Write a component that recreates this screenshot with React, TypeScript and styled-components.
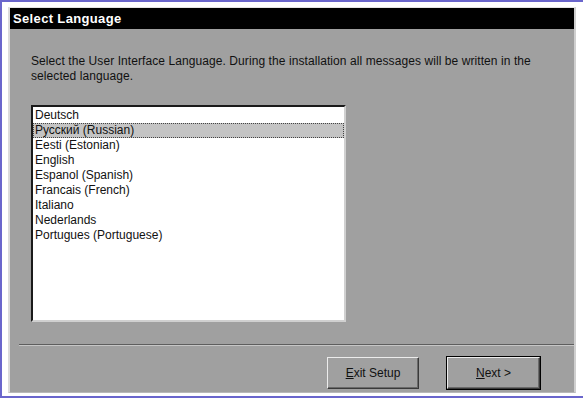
import React from "react";
import styled, { createGlobalStyle } from "styled-components";

const Global = createGlobalStyle`
  html, body { margin: 0; padding: 0; background: #ffffff; }
  body { font-family: "Liberation Sans", Arial, sans-serif; }
  * { box-sizing: border-box; }
`;

const Root = styled.div`
  width: 583px;
  height: 399px;
  background: #ffffff;
  overflow: hidden;
`;

const Frame = styled.div`
  height: 398px;
  border-top: 2px solid #6a66cc;
  border-left: 2px solid #6a66cc;
  border-bottom: 2px solid #6a66cc;
  padding: 5px 0 3px 6px;
  display: flex;
`;

const Dialog = styled.div`
  width: 568px;
  display: flex;
  flex-direction: column;
  background: #a0a0a0;
  border-top: 1px solid #e4e4e4;
  border-left: 2px solid #dcdcdc;
  border-right: 2px solid #cfcfcf;
  border-bottom: 1px solid #b8b8b8;
`;

const TitleBar = styled.div`
  height: 21px;
  background: #000000;
  color: #ffffff;
  font-weight: bold;
  font-size: 13px;
  line-height: 21px;
  padding-left: 3px;
  letter-spacing: 0.35px;
`;

const Body = styled.div`
  flex: 1;
  display: flex;
  flex-direction: column;
  padding: 25px 0 0 21px;
`;

const Intro = styled.p`
  margin: 0;
  width: 515px;
  font-size: 12px;
  line-height: 15px;
  letter-spacing: 0.08px;
  color: #111111;
`;

const ListBox = styled.ul`
  list-style: none;
  margin: 21px 0 0 0;
  padding: 1px 0 0 0;
  width: 315px;
  height: 217px;
  background: #ffffff;
  border-top: 2px solid #1a1a1a;
  border-left: 2px solid #1a1a1a;
  border-right: 2px solid #d0d0d0;
  border-bottom: 2px solid #d0d0d0;
`;

const Item = styled.li<{ $selected?: boolean }>`
  height: 15px;
  font-size: 12px;
  line-height: 15px;
  color: #111111;
  padding-left: 2px;
  background: ${(p) => (p.$selected ? "#c4c4c4" : "transparent")};
  outline: ${(p) => (p.$selected ? "1px dotted #444444" : "none")};
  outline-offset: -1px;
`;

const Separator = styled.div`
  margin: 22px 0 0 9px;
  height: 2px;
  border-top: 1px solid #5e5e5e;
  border-bottom: 1px solid #c6c6c6;
`;

const ButtonRow = styled.div`
  display: flex;
  justify-content: flex-end;
  gap: 28px;
  padding: 11px 34px 3px 0;
`;

const Button = styled.button<{ $default?: boolean; $w: number }>`
  width: ${(p) => p.$w}px;
  height: 32px;
  font-family: "Liberation Sans", Arial, sans-serif;
  font-size: 12px;
  color: #111111;
  background: #a0a0a0;
  padding: 0;
  border: 1px solid;
  border-color: #ececec #3a3a3a #3a3a3a #ececec;
  box-shadow: ${(p) =>
    p.$default
      ? "0 0 0 1px #000000, inset -1px -1px 0 #6a6a6a"
      : "inset -1px -1px 0 #6a6a6a"};
  u { text-decoration: underline; }
`;

const languages = [
  "Deutsch",
  "Русский (Russian)",
  "Eesti (Estonian)",
  "English",
  "Espanol (Spanish)",
  "Francais (French)",
  "Italiano",
  "Nederlands",
  "Portugues (Portuguese)",
];

export default function App() {
  return (
    <Root>
      <Global />
      <Frame>
        <Dialog>
          <TitleBar>Select Language</TitleBar>
          <Body>
            <Intro>
              Select the User Interface Language. During the installation all messages will be written in the
              selected language.
            </Intro>
            <ListBox>
              {languages.map((l, i) => (
                <Item key={l} $selected={i === 1}>
                  {l}
                </Item>
              ))}
            </ListBox>
          </Body>
          <Separator />
          <ButtonRow>
            <Button $w={92}>
              <u>E</u>xit Setup
            </Button>
            <Button $w={93} $default>
              <u>N</u>ext &gt;
            </Button>
          </ButtonRow>
        </Dialog>
      </Frame>
    </Root>
  );
}
